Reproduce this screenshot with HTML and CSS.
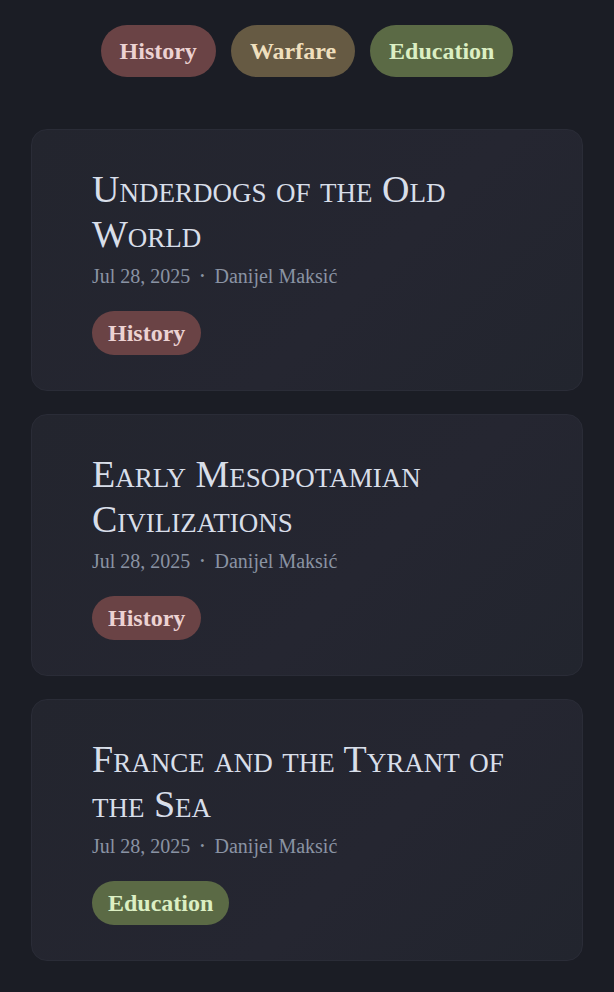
FILE: index.html
```html
<!DOCTYPE html>
<html lang="en">
<head>
<meta charset="utf-8">
<title>Posts</title>
<link rel="stylesheet" href="styles.css">
</head>
<body>
<main class="page">
  <nav class="filters">
    <a class="pill pill-history" href="#">History</a>
    <a class="pill pill-warfare" href="#">Warfare</a>
    <a class="pill pill-education" href="#">Education</a>
  </nav>
  <section class="posts">
    <article class="card">
      <h2 class="title">Underdogs of the Old World</h2>
      <p class="meta">Jul 28, 2025 <span class="dot">•</span> Danijel Maksić</p>
      <div class="tags"><span class="tag pill-history">History</span></div>
    </article>
    <article class="card">
      <h2 class="title">Early Mesopotamian Civilizations</h2>
      <p class="meta">Jul 28, 2025 <span class="dot">•</span> Danijel Maksić</p>
      <div class="tags"><span class="tag pill-history">History</span></div>
    </article>
    <article class="card">
      <h2 class="title">France and the Tyrant of the Sea</h2>
      <p class="meta">Jul 28, 2025 <span class="dot">•</span> Danijel Maksić</p>
      <div class="tags"><span class="tag pill-education">Education</span></div>
    </article>
  </section>
</main>
</body>
</html>
```
FILE: styles.css
```css
html, body {
  margin: 0;
  padding: 0;
}
body {
  background: #1b1d25;
  font-family: "Liberation Serif", "DejaVu Serif", serif;
  color: #d6dce8;
}
.page {
  padding: 25px 31px 30px;
}
.filters {
  display: flex;
  justify-content: center;
  gap: 15px;
}
.pill {
  display: inline-flex;
  align-items: center;
  height: 52px;
  padding: 0 19px;
  border-radius: 26px;
  font-size: 24px;
  font-weight: bold;
  text-decoration: none;
  box-sizing: border-box;
}
.pill-history { background: #6a4345; color: #ecd2d2; }
.pill-warfare { background: #665a43; color: #efdfbd; }
.pill-education { background: #5b6a45; color: #dcefc3; }
.posts {
  margin-top: 52px;
  display: flex;
  flex-direction: column;
  gap: 23px;
}
.card {
  background: linear-gradient(135deg, #23252e, #252631 60%, #22252e);
  border: 1px solid #2a2c37;
  border-radius: 16px;
  padding: 37px 60px 35px;
  min-height: 262px;
  box-sizing: border-box;
}
.title {
  margin: 0;
  font-size: 38px;
  font-weight: normal;
  font-variant: small-caps;
  line-height: 45px;
  color: #d8dee9;
}
.meta {
  margin: 6px 0 0;
  font-size: 20px;
  line-height: 26px;
  color: #8a93a3;
}
.dot {
  font-size: 12px;
  vertical-align: 3px;
  margin: 0 5px;
}
.tags {
  margin-top: 22px;
  display: flex;
}
.tag {
  display: inline-flex;
  align-items: center;
  height: 44px;
  padding: 0 16px;
  border-radius: 22px;
  font-size: 24px;
  font-weight: bold;
  box-sizing: border-box;
}
```
